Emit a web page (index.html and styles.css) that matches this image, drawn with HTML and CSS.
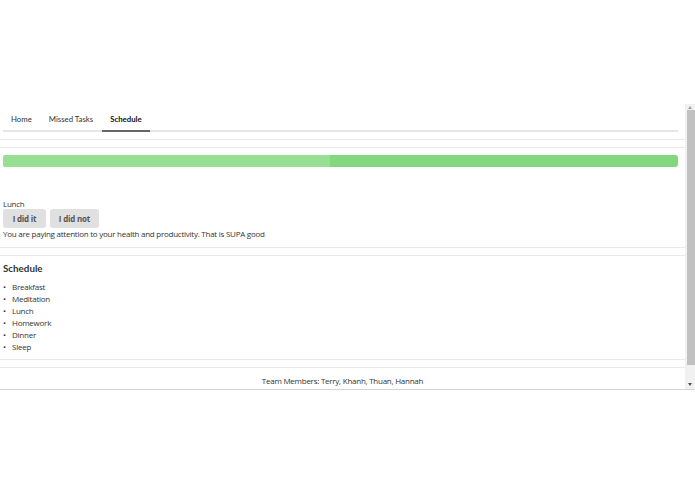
FILE: index.html
```html
<!DOCTYPE html>
<html lang="en">
<head>
    <meta charset="UTF-8">
    <meta name="viewport" content="width=device-width, initial-scale=1.0">
    <title>Schedule</title>
    <link rel="stylesheet" href="styles.css">
</head>
<body>
    <div class="frame">
        <div class="content">
            <div class="tabs">
                <a class="tab">Home</a>
                <a class="tab">Missed Tasks</a>
                <a class="tab active">Schedule</a>
            </div>
            <div class="rule"></div>
            <div class="rule"></div>

            <div class="progress">
                <div class="progress-done" style="width: 48.5%"></div>
            </div>

            <div class="task">
                <div class="task-name">Lunch</div>
                <div class="task-buttons">
                    <button>I did it</button>
                    <button>I did not</button>
                </div>
                <div class="task-msg">You are paying attention to your health and productivity. That is SUPA good</div>
            </div>
            <div class="rule"></div>
            <div class="rule"></div>

            <div class="schedule">
                <h2>Schedule</h2>
                <ul>
                    <li>Breakfast</li>
                    <li>Meditation</li>
                    <li>Lunch</li>
                    <li>Homework</li>
                    <li>Dinner</li>
                    <li>Sleep</li>
                </ul>
            </div>
            <div class="rule"></div>
            <div class="rule"></div>

            <footer>
                <div>Team Members: Terry, Khanh, Thuan, Hannah</div>
                <div>HackSD 2018 &copy;</div>
            </footer>
        </div>
        <!-- scrollbar drawn by hand, the real one is hidden in screenshots -->
        <div class="scrollbar">
            <div class="arrow up"></div>
            <div class="thumb"></div>
            <div class="arrow down"></div>
        </div>
    </div>
</body>
</html>
```

FILE: styles.css
```css
body {margin: 0; background: #ffffff; font-family: "Open Sans", "Noto Sans", sans-serif; font-size: 8px; letter-spacing: -0.25px; color: #333333;}

.frame {margin-top: 104px; height: 285px; border-bottom: 1px solid #d4d4d4; position: relative;}
.content {height: 100%; overflow: hidden; padding-right: 10px;}

.scrollbar {position: absolute; top: 0; right: 0; bottom: 0; width: 10px; background: #f1f1f1; display: flex; flex-direction: column; align-items: center;}
.scrollbar .thumb {width: 8px; height: 255px; margin: 1px 0 0 1px; background: #c1c1c1;}
.scrollbar .arrow {width: 0; height: 0; border-left: 2.5px solid transparent; border-right: 2.5px solid transparent;}
.scrollbar .arrow.up {border-bottom: 3px solid #a3a3a3; margin-top: 2px;}
.scrollbar .arrow.down {border-top: 3px solid #505050; margin-top: auto; margin-bottom: 3px;}

.tabs {display: flex; gap: 1px; margin: 6px 7px 0 3px; border-bottom: 2px solid #e6e6e6; font-family: Lato, sans-serif; font-size: 7.8px; letter-spacing: 0;}
.tab {padding: 4px 8px 6px; color: #333333; margin-bottom: -2px; border-bottom: 2px solid transparent;}
.tab.active {font-weight: bold; border-bottom-color: #666666; color: #111111;}

.rule {border-top: 1px solid #e9e9e9; margin-top: 7px;}

.progress {display: flex; height: 12px; margin: 7px 7px 0 3px; background: #83d77c; border-radius: 3px; overflow: hidden;}
.progress-done {background: #97e093;}

.task {padding: 32px 3px 0;}
.task-name {line-height: 10px;}
.task-buttons {display: flex; gap: 4px;}
.task-buttons button {font-family: "Open Sans", sans-serif; font-size: 8px; letter-spacing: -0.2px; font-weight: bold; color: #555555; background: #e0e0e0; border: 0; border-radius: 3px; padding: 0; height: 19px;}
.task-buttons button:first-child {width: 43px;}
.task-buttons button:last-child {width: 49px;}
.task-msg {line-height: 12px;}

.schedule {padding: 2px 3px 0;}
.schedule h2 {font-family: Lato, sans-serif; font-size: 9.8px; letter-spacing: 0; margin: 4px 0 7px; color: #333333;}
.schedule ul {margin: 0 0 -1px; padding: 0 0 0 9px; line-height: 12px;}
.schedule li {list-style: none; position: relative;}
.schedule li::before {content: "\2022"; position: absolute; left: -9px;}

footer {text-align: center; line-height: 12px; padding-top: 7px;}
```
